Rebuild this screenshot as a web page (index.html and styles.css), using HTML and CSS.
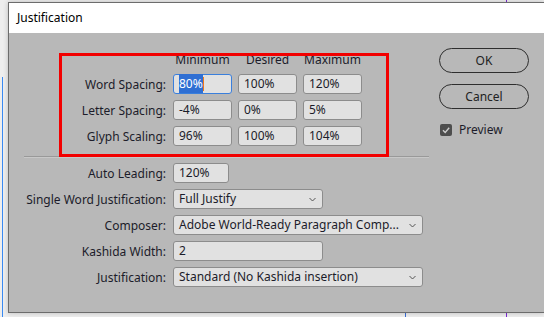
FILE: index.html
```html
<!DOCTYPE html>
<html lang="en">

<head>
    <meta charset="UTF-8">
    <title>Justification</title>
    <link rel="stylesheet" href="styles.css">
</head>

<body>

    <!-- guides from the document behind the dialog -->
    <div class="guide" id="guideleft"></div>
    <div class="guide" id="guideblue"></div>
    <div class="guide" id="guidepurple"></div>

    <div id="dialog">
        <div id="titlebar">Justification</div>

        <div id="content">
            <div id="main">
                <div class="grid" id="spacing">
                    <span></span>
                    <span class="colhead">Minimum</span>
                    <span class="colhead">Desired</span>
                    <span class="colhead">Maximum</span>

                    <label class="lbl">Word Spacing:</label>
                    <div class="field focused"><span class="sel">80%</span><span class="caret"></span></div>
                    <div class="field">100%</div>
                    <div class="field">120%</div>

                    <label class="lbl">Letter Spacing:</label>
                    <div class="field">-4%</div>
                    <div class="field">0%</div>
                    <div class="field">5%</div>

                    <label class="lbl">Glyph Scaling:</label>
                    <div class="field">96%</div>
                    <div class="field">100%</div>
                    <div class="field">104%</div>
                </div>

                <div id="sep"></div>

                <div class="grid" id="options">
                    <label class="lbl">Auto Leading:</label>
                    <div><div class="field small">120%</div></div>

                    <label class="lbl">Single Word Justification:</label>
                    <div><div class="field select mid">Full Justify
                        <svg class="arrow" width="7" height="5" viewBox="0 0 7 5"><polyline points="0.5,1 3.5,4 6.5,1" /></svg>
                    </div></div>

                    <label class="lbl">Composer:</label>
                    <div><div class="field select wide">Adobe World-Ready Paragraph Comp...
                        <svg class="arrow" width="7" height="5" viewBox="0 0 7 5"><polyline points="0.5,1 3.5,4 6.5,1" /></svg>
                    </div></div>

                    <label class="lbl">Kashida Width:</label>
                    <div><div class="field mid">2</div></div>

                    <label class="lbl">Justification:</label>
                    <div><div class="field select wide">Standard (No Kashida insertion)
                        <svg class="arrow" width="7" height="5" viewBox="0 0 7 5"><polyline points="0.5,1 3.5,4 6.5,1" /></svg>
                    </div></div>
                </div>
            </div>

            <div id="side">
                <button class="btn">OK</button>
                <button class="btn">Cancel</button>
                <label class="check">
                    <span class="box">
                        <svg width="12" height="12" viewBox="0 0 12 12"><polyline points="3,6.2 5.2,8.4 9.2,3.8" /></svg>
                    </span>
                    Preview
                </label>
            </div>

            <div id="redbox"></div>
        </div>
    </div>

</body>

</html>
```

FILE: styles.css
```css
html,
body {
    margin: 0;
    height: 100%;
    overflow: hidden;
}

body {
    background-color: rgb(238, 238, 238);
    font-family: "Noto Sans", "Open Sans", sans-serif;
    font-size: 12px;
    color: #1c1c2a;
    position: relative;
}

.guide {
    position: absolute;
}

#guideleft {
    left: 2px;
    top: 77px;
    width: 1px;
    height: 240px;
    background-color: #3a8af2;
}

#guideblue {
    left: 405px;
    top: 300px;
    width: 1px;
    height: 17px;
    background-color: #3a6fd8;
}

#guidepurple {
    left: 506px;
    top: 0;
    width: 1px;
    height: 317px;
    background-color: #7b2ad6;
}

#dialog {
    position: relative;
    margin: 2px 0 0 8px;
    width: 535px;
    border: 1px solid #6c6c6c;
    border-right: none;
    background-color: #b8b8b8;
    box-shadow: 0 0 5px rgba(0, 0, 0, 0.22);
}

#titlebar {
    height: 30px;
    line-height: 30px;
    padding-left: 8px;
    background-color: white;
    color: black;
}

#content {
    position: relative;
    display: flex;
    height: 279px;
}

#main {
    width: 430px;
    padding-top: 19px;
}

.grid {
    display: grid;
    grid-template-columns: 158px 59px 59px 59px;
    column-gap: 6px;
    row-gap: 6px;
    align-items: center;
}

#spacing {
    grid-template-rows: 16px 20px 20px 20px;
}

#options {
    grid-template-columns: 158px auto;
    grid-auto-rows: 20px;
}

.colhead {
    text-align: center;
    line-height: 16px;
}

.lbl {
    text-align: right;
    padding-right: 1px;
    white-space: nowrap;
}

.field {
    box-sizing: border-box;
    height: 20px;
    line-height: 18px;
    padding-left: 5px;
    background-color: #e1e1e1;
    border: 1px solid #8c8c8c;
    border-radius: 3px;
    white-space: nowrap;
    position: relative;
}

.focused {
    border-color: #3a7fdc;
}

.sel {
    background-color: #2f6fd3;
    color: white;
    padding: 1px 0;
}

.caret {
    display: inline-block;
    width: 1px;
    height: 14px;
    vertical-align: -3px;
    background-color: #f07a1a;
}

.small {
    width: 56px;
}

.mid {
    width: 150px;
}

.wide {
    width: 250px;
}

.arrow {
    position: absolute;
    right: 6px;
    top: 7px;
    fill: none;
    stroke: #555;
    stroke-width: 1;
}

#sep {
    margin: 10px 10px 5px 15px;
    height: 0;
    border-top: 1px solid #999;
    border-bottom: 1px solid #c8c8c8;
}

#side {
    width: 90px;
    padding-top: 15px;
    display: flex;
    flex-direction: column;
}

.btn {
    height: 25px;
    margin-bottom: 11px;
    background-color: #b8b8b8;
    border: 1.5px solid #2e2e2e;
    border-radius: 13px;
    font-family: "Noto Sans", "Open Sans", sans-serif;
    font-size: 12px;
    color: #222;
    padding: 0;
}

.check {
    display: flex;
    align-items: center;
    margin-top: 3px;
    margin-left: 1px;
    gap: 7px;
    line-height: 14px;
}

.box {
    width: 12px;
    height: 12px;
    background-color: #4e4e4e;
    border-radius: 2px;
}

.box svg {
    display: block;
    fill: none;
    stroke: #cfcfcf;
    stroke-width: 1.4;
}

#redbox {
    position: absolute;
    left: 50px;
    top: 20px;
    width: 330px;
    height: 104px;
    box-sizing: border-box;
    border: 3px solid #f20000;
}
```
